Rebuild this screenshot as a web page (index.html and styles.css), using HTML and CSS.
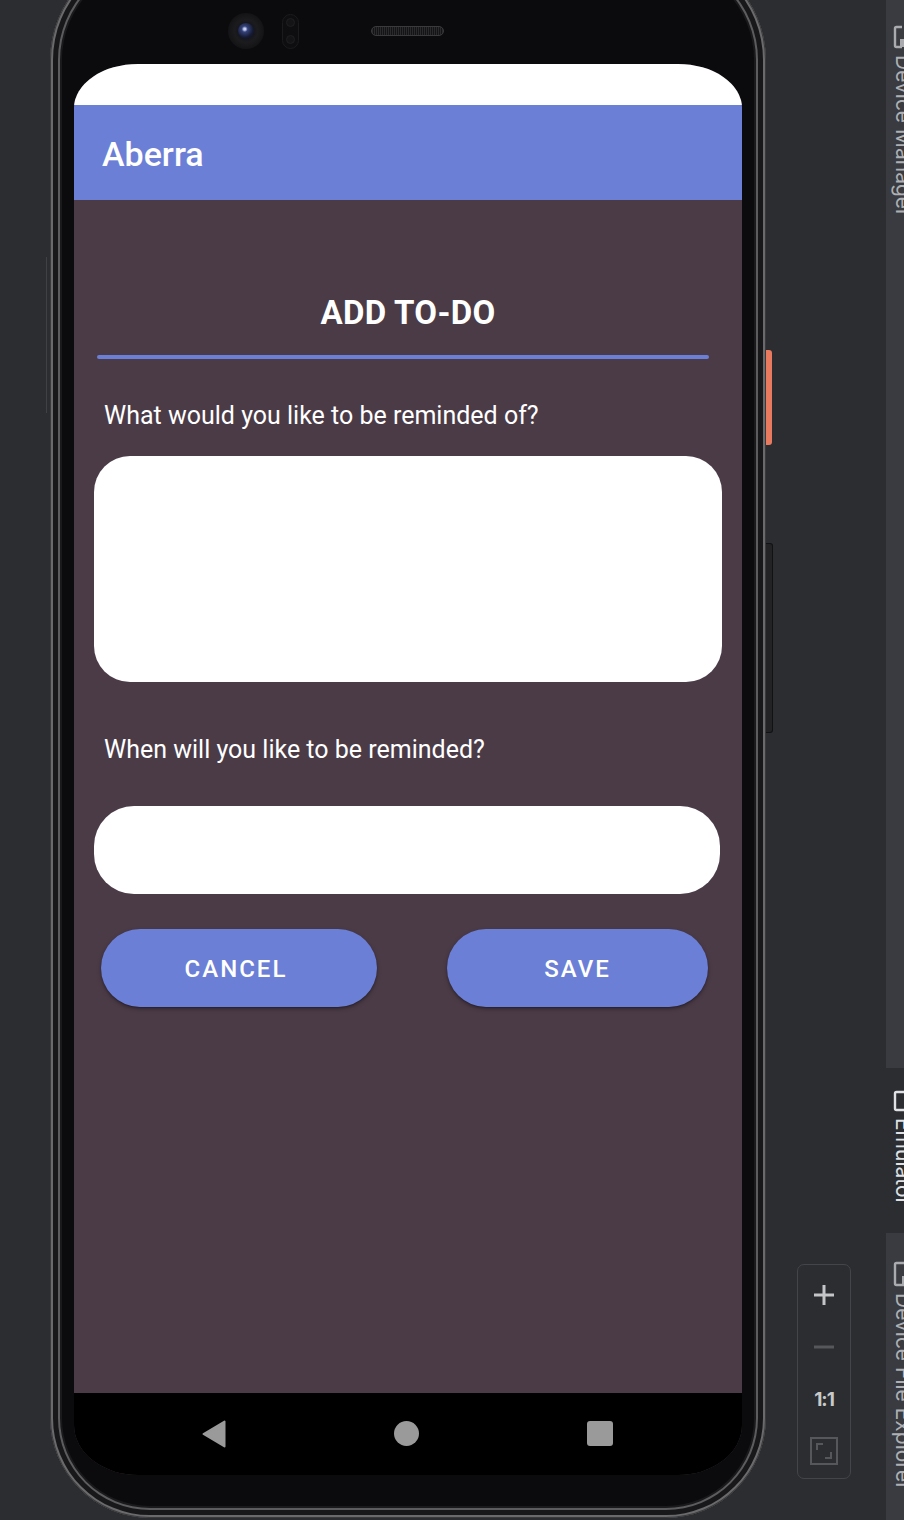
FILE: index.html
```html
<!DOCTYPE html>
<html lang="en">
<head>
<meta charset="utf-8">
<title>Aberra - Add To-Do</title>
<link rel="stylesheet" href="styles.css">
</head>
<body>
<div class="canvas">
  <div class="side-line"></div>
  <div class="phone">
    <div class="btn-power"></div>
    <div class="btn-volume"></div>
    <div class="bezel-top">
      <div class="camera"><div class="lens"></div></div>
      <div class="sensor"><span></span><span></span></div>
      <div class="speaker"></div>
    </div>
    <div class="screen">
      <div class="statusbar"></div>
      <div class="appbar">Aberra</div>
      <div class="content">
        <div class="title">ADD TO-DO</div>
        <div class="divider"></div>
        <div class="label label-first">What would you like to be reminded of?</div>
        <div class="field field-big"></div>
        <div class="label label-second">When will you like to be reminded?</div>
        <div class="field field-small"></div>
        <div class="buttons">
          <div class="btn btn-cancel">CANCEL</div>
          <div class="btn btn-save">SAVE</div>
        </div>
      </div>
      <div class="navbar">
        <div class="navcell">
          <svg width="24" height="28" viewBox="0 0 24 28"><polygon points="22.5,1.5 22.5,26.5 1.5,14" fill="#9a9a9a" stroke="#9a9a9a" stroke-width="2" stroke-linejoin="round"/></svg>
        </div>
        <div class="navcell"><div class="nav-home"></div></div>
        <div class="navcell"><div class="nav-recent"></div></div>
      </div>
    </div>
  </div>
  <div class="zoombox">
    <div class="zitem">
      <svg width="22" height="22" viewBox="0 0 22 22"><path d="M11 1v20M1 11h20" stroke="#c4c5c7" stroke-width="3"/></svg>
    </div>
    <div class="zitem">
      <svg width="22" height="22" viewBox="0 0 22 22"><path d="M1 11h20" stroke="#55575a" stroke-width="3"/></svg>
    </div>
    <div class="zitem zone">1:1</div>
    <div class="zitem">
      <svg width="28" height="28" viewBox="0 0 28 28"><rect x="1" y="1" width="26" height="26" fill="none" stroke="#55575a" stroke-width="2"/><path d="M7 13V7h6M21 15v6h-6" fill="none" stroke="#55575a" stroke-width="2"/></svg>
    </div>
  </div>
</div>
<div class="sidebar">
  <div class="tab tab-dm">
    <svg class="ticon" width="18" height="24" viewBox="0 0 18 24"><path d="M9 2H3.5Q2 2 2 3.5V20.5Q2 22 3.5 22H9" fill="none" stroke="#a9abae" stroke-width="2.4"/><rect x="7" y="14" width="9" height="8" fill="#a9abae"/></svg>
    <span class="vtext">Device Manager</span>
  </div>
  <div class="spacer"></div>
  <div class="tab tab-emu">
    <svg class="ticon" width="18" height="22" viewBox="0 0 18 22"><path d="M12 2H3.5Q2 2 2 3.5V18.5Q2 20 3.5 20H12" fill="none" stroke="#dfe1e5" stroke-width="2.4"/></svg>
    <span class="vtext">Emulator</span>
  </div>
  <div class="tab tab-dfe">
    <svg class="ticon" width="18" height="26" viewBox="0 0 18 26"><path d="M12 2H3.5Q2 2 2 3.5V22.5Q2 24 3.5 24H12" fill="none" stroke="#a9abae" stroke-width="2.4"/><rect x="9" y="15" width="9" height="9" fill="#a9abae"/></svg>
    <span class="vtext">Device File Explorer</span>
  </div>
</div>
</body>
</html>
```

FILE: styles.css
```css
* { box-sizing: border-box; }

html, body {
  margin: 0;
  padding: 0;
}

body {
  width: 904px;
  height: 1520px;
  overflow: hidden;
  display: flex;
  background: #2b2d30;
  font-family: Roboto, "Noto Sans", sans-serif;
}

.canvas {
  position: relative;
  flex: 0 0 886px;
  height: 1520px;
  overflow: hidden;
  background: #2b2d30;
}

.side-line {
  position: absolute;
  left: 46px;
  top: 257px;
  width: 1px;
  height: 156px;
  background: #3f4143;
}

/* ---------- phone frame ---------- */
.phone {
  position: relative;
  width: 716px;
  height: 1568px;
  margin: -50px 0 0 50px;
  border-radius: 110px 110px 100px 100px;
  background: #0b0a0d;
  box-shadow:
    inset 0 0 0 1px #3a3a3c,
    inset 0 0 0 3px #6a6a6c,
    inset 0 0 0 8px #18181a,
    inset 0 0 0 10px #5c5c5e,
    inset 0 0 0 12px #1a1a1c;
  display: flex;
  flex-direction: column;
  align-items: center;
}

.btn-power {
  position: absolute;
  left: 716px;
  top: 400px;
  width: 6px;
  height: 95px;
  border-radius: 0 3px 3px 0;
  background: #e87a60;
}

.btn-volume {
  position: absolute;
  left: 716px;
  top: 593px;
  width: 7px;
  height: 190px;
  border-radius: 0 3px 3px 0;
  background: #232325;
  border: 1px solid #121214;
  border-left: none;
}

.bezel-top {
  width: 100%;
  height: 114px;
  flex: 0 0 114px;
  padding: 48px 0 0 178px;
  display: flex;
  align-items: center;
}

.camera {
  width: 36px;
  height: 36px;
  border-radius: 50%;
  background: radial-gradient(circle, #15161c 0 30%, #1c1c1f 45%, #121214 75%, #0c0c0e 100%);
  display: flex;
  align-items: center;
  justify-content: center;
}

.lens {
  width: 16px;
  height: 16px;
  border-radius: 50%;
  background: radial-gradient(circle at 42% 38%, #c8d0f5 0 7%, #34427a 22%, #161b33 60%, #0b0c14 100%);
}

.sensor {
  width: 17px;
  height: 35px;
  margin-left: 18px;
  border-radius: 9px;
  background: #0e0e10;
  border: 1px solid #1b1b1e;
  display: flex;
  flex-direction: column;
  align-items: center;
  justify-content: space-around;
}

.sensor span {
  width: 9px;
  height: 9px;
  border-radius: 50%;
  background: #141416;
  border: 1px solid #1f1f22;
}

.speaker {
  width: 73px;
  height: 10px;
  margin-left: 72px;
  border-radius: 5px;
  background: repeating-linear-gradient(90deg, #2a2a2d 0 1px, #141416 1px 2px);
  border: 1px solid #3a3a3d;
}

/* ---------- screen ---------- */
.screen {
  width: 668px;
  height: 1411px;
  flex: 0 0 1411px;
  display: flex;
  flex-direction: column;
  overflow: hidden;
  border-radius: 64px 64px 64px 64px / 44px 44px 50px 50px;
  background: #4b3b47;
}

.statusbar {
  height: 41px;
  flex: 0 0 41px;
  background: #ffffff;
}

.appbar {
  height: 95px;
  flex: 0 0 95px;
  background: #6b7fd7;
  color: #ffffff;
  font-size: 34px;
  font-weight: 500;
  line-height: 95px;
  padding-left: 28px;
  padding-top: 2px;
}

.content {
  flex: 1;
  display: flex;
  flex-direction: column;
  background: #4b3b47;
}

.title {
  margin-top: 94px;
  text-align: center;
  color: #ffffff;
  font-size: 33px;
  font-weight: 700;
  line-height: 38px;
  letter-spacing: 0.3px;
}

.divider {
  height: 4px;
  margin: 23px 33px 0 23px;
  border-radius: 2px;
  background: #6b7fd7;
}

.label {
  margin-left: 30px;
  color: #ffffff;
  font-size: 25px;
  font-weight: 400;
  line-height: 30px;
}

.label-first { margin-top: 42px; }
.label-second { margin-top: 53px; }

.field {
  background: #ffffff;
}

.field-big {
  margin: 25px 0 0 20px;
  width: 628px;
  height: 226px;
  border-radius: 36px;
}

.field-small {
  margin: 41px 0 0 20px;
  width: 626px;
  height: 88px;
  border-radius: 40px;
}

.buttons {
  display: flex;
  margin: 35px 0 0 27px;
  gap: 70px;
}

.btn {
  height: 78px;
  border-radius: 39px;
  background: #6b7fd7;
  color: #ffffff;
  font-size: 24px;
  font-weight: 500;
  letter-spacing: 2px;
  display: flex;
  align-items: center;
  justify-content: center;
  padding-top: 2px;
  box-shadow: 0 2px 4px rgba(0, 0, 0, 0.35), 0 1px 1px rgba(0, 0, 0, 0.2);
}

.btn-cancel { width: 276px; padding-right: 6px; }
.btn-save { width: 261px; }

.navbar {
  height: 82px;
  flex: 0 0 82px;
  background: #000000;
  display: flex;
  align-items: center;
  padding-left: 43px;
  padding-bottom: 1px;
}

.navcell {
  width: 193px;
  display: flex;
  justify-content: center;
  align-items: center;
}

.nav-home {
  width: 25px;
  height: 25px;
  border-radius: 50%;
  background: #9a9a9a;
}

.nav-recent {
  width: 26px;
  height: 25px;
  border-radius: 3px;
  background: #9a9a9a;
}

/* ---------- zoom controls ---------- */
.zoombox {
  position: absolute;
  left: 797px;
  top: 1264px;
  width: 54px;
  height: 215px;
  border: 1px solid #43454a;
  border-radius: 7px;
  background: #2b2d30;
  display: flex;
  flex-direction: column;
  padding-top: 4px;
}

.zitem {
  height: 52px;
  display: flex;
  align-items: center;
  justify-content: center;
}

.zone {
  color: #c8c9cb;
  font-family: Inter, "Liberation Sans", sans-serif;
  font-size: 19px;
  font-weight: 700;
  letter-spacing: -1px;
}

/* ---------- right tool strip ---------- */
.sidebar {
  flex: 0 0 18px;
  height: 1520px;
  overflow: hidden;
  background: #393b40;
  display: flex;
  flex-direction: column;
}

.tab {
  display: flex;
  flex-direction: column;
  align-items: flex-start;
  padding-left: 7px;
  gap: 6px;
}

.tab-dm { padding-top: 25px; }

.spacer { flex: 1; }

.tab-emu {
  height: 165px;
  flex: 0 0 165px;
  padding-top: 22px;
  background: #2b2d30;
}

.tab-dfe {
  height: 287px;
  flex: 0 0 287px;
  padding-top: 28px;
}

.ticon { display: block; flex: none; }

.vtext {
  writing-mode: vertical-rl;
  text-orientation: sideways;
  width: 21px;
  flex: none;
  font-family: Inter, "Liberation Sans", sans-serif;
  font-size: 21px;
  line-height: 21px;
  color: #aeb0b4;
  white-space: nowrap;
}

.tab-emu .vtext { color: #dfe1e5; }
```
